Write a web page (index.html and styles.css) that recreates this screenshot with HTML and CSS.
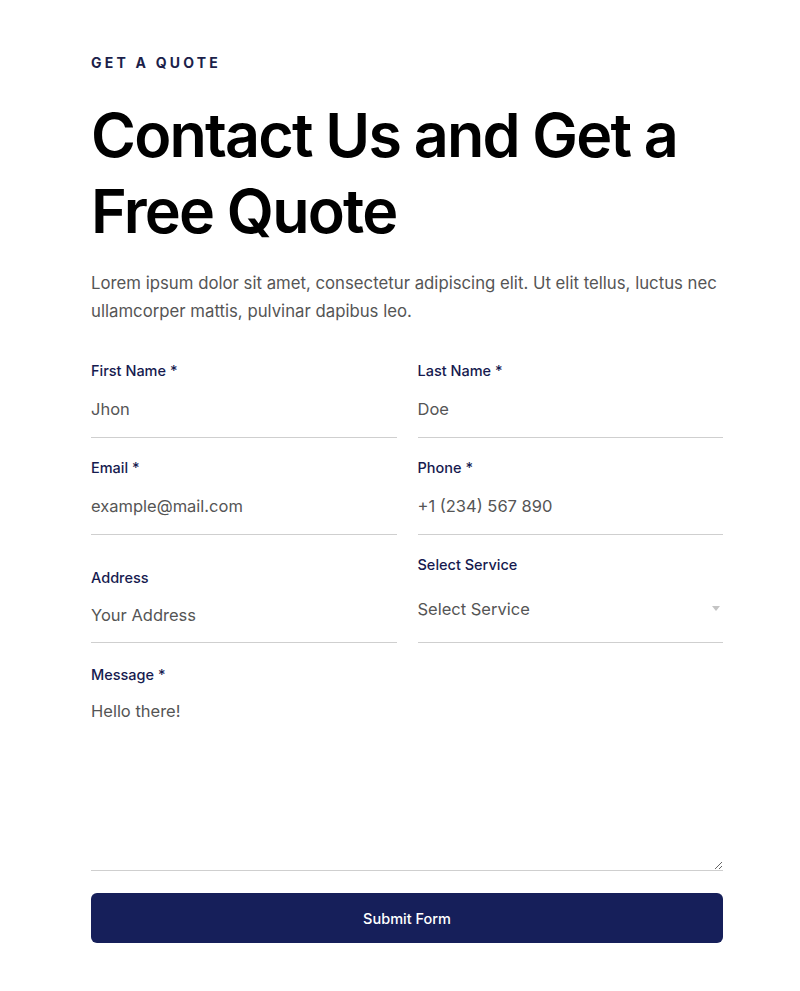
FILE: index.html
```html
<!DOCTYPE html>
<html lang="en">
<head>
<meta charset="utf-8">
<title>Get a Quote</title>
<link rel="stylesheet" href="styles.css">
</head>
<body>
<section class="quote">
  <p class="eyebrow">GET A QUOTE</p>
  <h1 class="title">Contact Us and Get a<br>Free Quote</h1>
  <p class="lead">Lorem ipsum dolor sit amet, consectetur adipiscing elit. Ut elit tellus, luctus nec ullamcorper mattis, pulvinar dapibus leo.</p>
  <form class="form">
    <div class="field">
      <label class="label" for="fn">First Name *</label>
      <input class="input" id="fn" type="text" value="Jhon">
    </div>
    <div class="field">
      <label class="label" for="ln">Last Name *</label>
      <input class="input" id="ln" type="text" value="Doe">
    </div>
    <div class="field">
      <label class="label" for="em">Email *</label>
      <input class="input" id="em" type="text" placeholder="example@mail.com">
    </div>
    <div class="field">
      <label class="label" for="ph">Phone *</label>
      <input class="input" id="ph" type="text" placeholder="+1 (234) 567 890">
    </div>
    <div class="field">
      <label class="label" for="ad">Address</label>
      <input class="input input-short" id="ad" type="text" placeholder="Your Address">
    </div>
    <div class="field">
      <label class="label" for="sv">Select Service</label>
      <div class="select-wrap">
        <select class="select" id="sv">
          <option>Select Service</option>
        </select>
        <span class="caret"></span>
      </div>
    </div>
    <div class="field field-wide">
      <label class="label" for="ms">Message *</label>
      <textarea class="textarea" id="ms">Hello there!</textarea>
    </div>
    <button class="submit" type="button">Submit Form</button>
  </form>
</section>
</body>
</html>
```
FILE: styles.css
```css
* { box-sizing: border-box; }
body {
  margin: 0;
  background: #ffffff;
  font-family: Inter, "Noto Sans", sans-serif;
  color: #555555;
}
.quote {
  padding: 51px 77px 40px 91px;
}
.eyebrow {
  margin: 0;
  font-size: 14px;
  line-height: 24px;
  font-weight: 700;
  letter-spacing: 3.2px;
  color: #1c1f4a;
}
.title {
  margin: 22px 0 0;
  font-size: 61px;
  line-height: 76px;
  font-weight: 600;
  letter-spacing: -1.8px;
  color: #000000;
}
.lead {
  margin: 20px 0 0;
  font-size: 16.75px;
  line-height: 28px;
  color: #555555;
}
.form {
  margin-top: 36px;
  display: grid;
  grid-template-columns: 1fr 1fr;
  column-gap: 21px;
  row-gap: 20px;
  align-items: end;
}
.field {
  display: flex;
  flex-direction: column;
}
.field-wide {
  grid-column: 1 / -1;
  margin-top: 2px;
}
.label {
  font-size: 14.5px;
  line-height: 20px;
  font-weight: 500;
  color: #161a4f;
}
.input, .select, .textarea {
  font-family: inherit;
  font-size: 16.5px;
  color: #555555;
  border: 0;
  border-bottom: 1px solid #cfcfcf;
  background: transparent;
  outline: none;
  padding: 0;
  margin: 0;
  width: 100%;
  border-radius: 0;
}
.input {
  height: 57px;
  line-height: 20px;
}
.input-short { height: 55px; }
.input::placeholder { color: #555555; opacity: 1; }
.select-wrap {
  position: relative;
}
.select {
  height: 68px;
  appearance: none;
  -webkit-appearance: none;
}
.caret {
  position: absolute;
  right: 3px;
  top: 31px;
  width: 0;
  height: 0;
  border-left: 4px solid transparent;
  border-right: 4px solid transparent;
  border-top: 5px solid #c4c4c4;
}
.textarea {
  height: 186px;
  padding-top: 16px;
  line-height: 20px;
  resize: vertical;
  display: block;
}
.submit {
  grid-column: 1 / -1;
  margin-top: 2px;
  height: 50px;
  border: 0;
  border-radius: 6px;
  background: #161f5a;
  color: #ffffff;
  font-family: inherit;
  font-size: 14.5px;
  font-weight: 500;
}
```
